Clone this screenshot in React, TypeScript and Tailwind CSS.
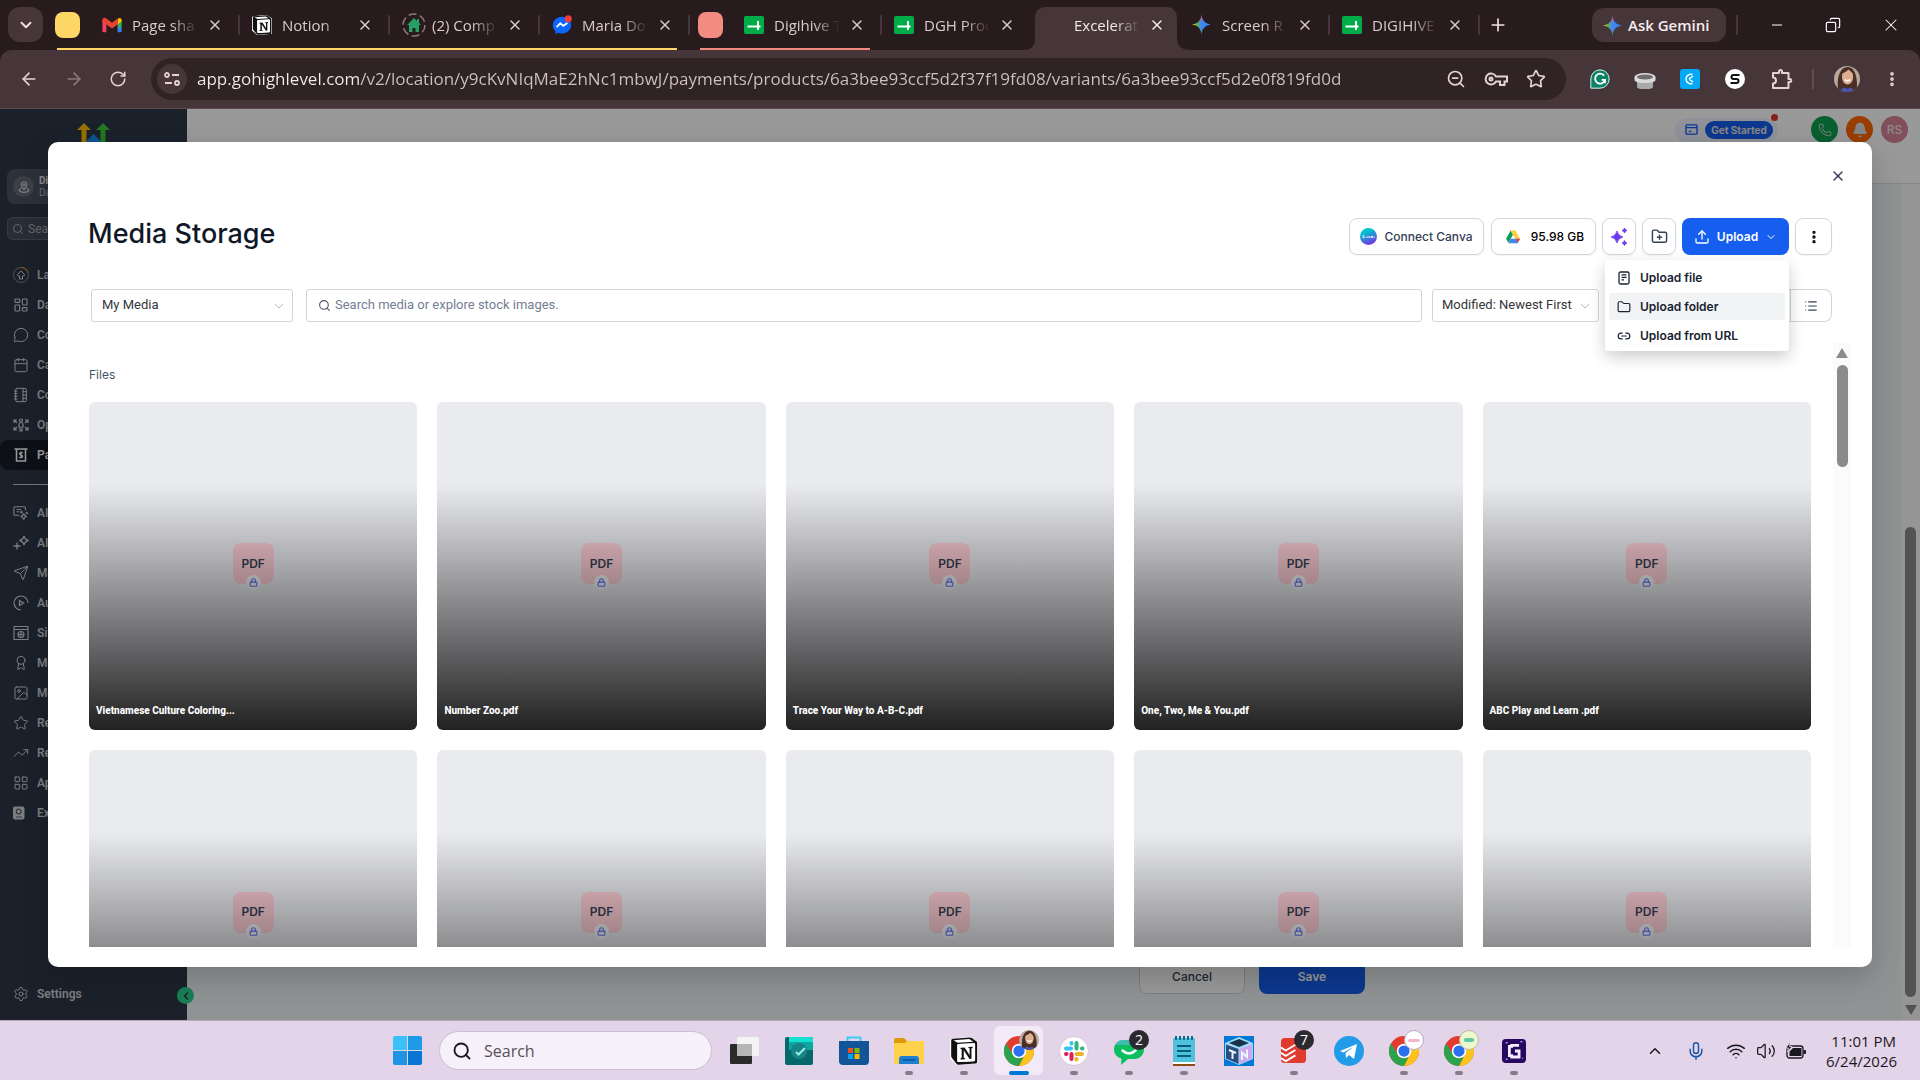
import type { ReactNode } from "react";
import {
  ArrowLeft,
  ArrowRight,
  Award,
  Bell,
  Calendar,
  ChevronDown,
  ChevronLeft,
  ChevronUp,
  Copy,
  EllipsisVertical,
  Folder,
  FolderPlus,
  Image as ImageIcon,
  LayoutDashboard,
  LayoutGrid,
  Link2,
  List,
  Lock,
  MessageCircle,
  Mic,
  Minus,
  NotebookTabs,
  Phone,
  Plus,
  RotateCw,
  Search,
  Send,
  Settings,
  Star,
  TrendingUp,
  Upload,
  Volume2,
  Wifi,
  X,
  ZoomOut,
} from "lucide-react";

const STAR = "M12 0C12.9 7 17 11.1 24 12C17 12.9 12.9 17 12 24C11.1 17 7 12.9 0 12C7 11.1 11.1 7 12 0Z";

function GmailIcon() {
  return (
    <svg viewBox="0 0 24 20" className="h-4 w-5">
      <path fill="#f0435f" d="M0 3.500 5 7v12H1.500A1.500 1.500 0 0 1 0 17.500z" />
      <path fill="#3c7df0" d="M19 12h5v5.500a1.500 1.500 0 0 1-1.500 1.500H19z" />
      <path fill="#2fb457" d="M19 7l5-3.500V13h-5z" />
      <path fill="#fbbc04" d="M19 2.500C21 .2 24 1 24 4v1.500L19 9.500z" />
      <path fill="#ea4335" d="M0 5.500V4C0 1 3 .2 5 2l7 5.300L19 2v7.500l-7 5-7-5z" />
    </svg>
  );
}

function NotionIcon({ className }: { className: string }) {
  return (
    <svg viewBox="0 0 24 24" className={className}>
      <path fill="#fff" d="M0 2 16.500-.5 24 4v18.500L6.500 24.500 0 18.500z" />
      <path fill="#111" d="M1 3.200C1 2 1.600 1.500 2.700 1.400L16.600.4c1-.1 1.600.1 2.400.7l3.500 2.500c.6.4.8.8.8 1.500v15.800c0 1.200-.6 1.800-1.800 1.900L7.600 23.700c-1 .1-1.500-.1-2.100-.8L1.700 18c-.5-.6-.7-1-.7-1.700zM6.300 7.200v13.300c0 .8.400 1.100 1.200 1l13-.8c.8 0 1-.5 1-1.200V6.300c0-.7-.3-1-.9-1L7.200 6.100c-.6.1-.9.400-.9 1.100z" />
      <path fill="#fff" d="M6.300 7.200c0-.7.300-1 .9-1.100l13.400-.8c.6 0 .9.300.9 1v13.200c0 .7-.2 1.200-1 1.200l-13 .8c-.8.1-1.200-.2-1.200-1z" />
      <path fill="#fff" d="M3 2.700 16.500 1.700 20 4 6.500 4.900z" />
      <path fill="#111" d="M9 9.200 12.500 9l4.300 6.600V9.700l-1-.2V8.600l3.600-.2v1l-1 .3v9l-1.700.2-4.900-7.500v6.500l1.200.3v.8L9 19.200v-.9l1-.3v-7.600L9 10.200z" />
    </svg>
  );
}

function HouseIcon() {
  return (
    <svg viewBox="0 0 24 24" className="size-6">
      <circle cx="12" cy="12" r="11" fill="none" stroke="#8c7a7d" strokeWidth="1.500" strokeDasharray="8 3.500" />
      <path fill="#27a065" d="M12 5 19 12h-2v7h-3.500v-4h-3v4H7v-7H5z" />
      <path fill="#27a065" d="M15 6h2v4h-2z" />
    </svg>
  );
}

function MessengerIcon() {
  return (
    <svg viewBox="0 0 24 24" className="size-5">
      <path fill="#0a66ff" d="M12 2C5.500 2 1 6.600 1 12.300c0 3 1.300 5.500 3.200 7.200V23l3-1.700c1.500.5 3 .8 4.800.8 6.500 0 11-4.600 11-10S18.500 2 12 2z" />
      <path d="m5.500 14.500 4.500-4.500 3.500 3 5-3.500" fill="none" stroke="#fff" strokeWidth="2.200" />
      <circle cx="19.500" cy="4.500" r="4.300" fill="#f23c3c" />
    </svg>
  );
}

function SheetIcon() {
  return (
    <svg viewBox="0 0 20 20" className="size-5">
      <rect y="1" width="20" height="18" rx="2" fill="#00ac47" />
      <path d="M3.500 11.500h13M14 6v9" stroke="#fff" strokeWidth="2" fill="none" />
    </svg>
  );
}

function GeminiIcon() {
  return (
    <svg viewBox="0 0 24 24" className="size-[19px]">
      <defs>
        <linearGradient id="gem" x1="0" y1="0.500" x2="1" y2="0.500">
          <stop offset="0" stopColor="#fbbc04" />
          <stop offset="0.300" stopColor="#4fae6a" />
          <stop offset="0.500" stopColor="#4285f4" />
          <stop offset="1" stopColor="#3b82f6" />
        </linearGradient>
        <linearGradient id="gemTop" x1="0.500" y1="0" x2="0.500" y2="1">
          <stop offset="0" stopColor="#f2453a" />
          <stop offset="0.350" stopColor="#f2453a" stopOpacity="0" />
          <stop offset="0.700" stopColor="#34a853" stopOpacity="0" />
          <stop offset="1" stopColor="#34a853" />
        </linearGradient>
      </defs>
      <path d={STAR} fill="url(#gem)" />
      <path d={STAR} fill="url(#gemTop)" />
    </svg>
  );
}

function ChromeIcon() {
  return (
    <svg viewBox="0 0 24 24" className="size-[30px]">
      <circle cx="12" cy="12" r="12" fill="#e33b2e" />
      <path fill="#2ba24c" d="M1.600 6A12 12 0 0 0 12 24l4.800-9.250a5.500 5.500 0 0 1-9.600 0z" />
      <path fill="#fcc31e" d="M12 24A12 12 0 0 0 22.400 6H12a6 6 0 0 1 4.800 8.750z" />
      <circle cx="12" cy="12" r="5.800" fill="#fff" />
      <circle cx="12" cy="12" r="4.500" fill="#2a6ff0" />
    </svg>
  );
}

function Portrait({ className }: { className: string }) {
  return (
    <svg viewBox="0 0 24 24" className={className}>
      <clipPath id="face">
        <circle cx="12" cy="12" r="12" />
      </clipPath>
      <g clipPath="url(#face)">
        <rect width="24" height="24" fill="#b9a99c" />
        <path fill="#4a2f28" d="M4 24C2 12 5 1 12.500 1S22 12 21 24z" />
        <ellipse cx="12.500" cy="10" rx="5.200" ry="7" fill="#dcae92" />
        <path fill="#4a2f28" d="M7 7c1-4 5-5.500 6-5.500S18 3 18.200 7c-2-1-3.700-2.500-4.700-4C12 5 9 6.500 7 7z" />
        <path d="M10 12.500q2.500 2.500 5 0" stroke="#fff" strokeWidth="1.400" fill="none" />
        <path fill="#4b53b5" d="M6 24c1-4 4-5 6.500-2.500C15 19 18 20 18 24z" />
      </g>
    </svg>
  );
}

type TabProps = { icon?: ReactNode; title: string; active?: boolean; divider?: boolean };

function Tab({ icon, title, active, divider }: TabProps) {
  return (
    <div
      className={`relative flex h-[43px] shrink-0 items-center pb-2 pl-3 ${
        active ? "w-[148px] text-[#f3e9ea]" : "w-[150px] text-[#d9cccf]"
      }`}
    >
      {active && (
        <svg viewBox="0 0 166 43" className="absolute top-0 -left-2 h-[43px] w-[166px]">
          <path fill="#473639" d="M0 43c7 0 11-4 11-11V11C11 4 15 0 22 0h120c7 0 11 4 11 11v21c0 7 5 11 13 11z" />
        </svg>
      )}
      <span className="relative flex w-6 shrink-0 items-center">{icon}</span>
      <span className="relative ml-[6px] w-[66px] text-[15px] leading-5 whitespace-nowrap [mask-image:linear-gradient(90deg,#000_60%,transparent)]">
        {title}
      </span>
      <button aria-label={`Close ${title}`} className="relative ml-[9px] flex size-4 items-center justify-center">
        <X className="size-4" strokeWidth={2.250} />
      </button>
      {divider && <span className="absolute top-2 right-0 h-5 w-[2px] rounded bg-[#473639]" />}
    </div>
  );
}

function BrowserTabs() {
  return (
    <div className="flex h-[50px] items-end bg-[#281b1d] pl-2">
      <button aria-label="Search tabs" className="mb-2 flex h-[35px] w-[35px] shrink-0 items-center justify-center rounded-xl bg-[#473639] text-[#f3dfe2]">
        <ChevronDown className="size-[18px]" strokeWidth={2.500} />
      </button>
      <div className="relative ml-3 flex items-end">
        <span className="mr-[10px] mb-3 h-[26px] w-[25px] rounded-lg bg-[#fed665]" />
        <Tab icon={<GmailIcon />} title="Page sha" divider />
        <Tab icon={<NotionIcon className="size-5" />} title="Notion" divider />
        <Tab icon={<HouseIcon />} title="(2) Comp" divider />
        <Tab icon={<MessengerIcon />} title="Maria Do" divider />
        <span className="absolute right-[13px] bottom-0 left-[2px] h-[2px] bg-[#fed665]" />
      </div>
      <div className="relative ml-2 flex items-end">
        <span className="mr-[9px] mb-3 h-[26px] w-[25px] rounded-lg bg-[#f28b82]" />
        <Tab icon={<SheetIcon />} title="Digihive T" divider />
        <Tab icon={<SheetIcon />} title="DGH Proc" />
        <span className="absolute bottom-0 left-[2px] h-[2px] w-[170px] bg-[#f28b82]" />
      </div>
      <Tab title="Excelerat" active />
      <Tab icon={<GeminiIcon />} title="Screen R" divider />
      <Tab icon={<SheetIcon />} title="DIGIHIVE" divider />
      <button aria-label="New tab" className="mb-[15px] ml-2 text-[#f3dfe2]">
        <Plus className="size-5" />
      </button>
      <div className="mb-2 ml-auto flex items-center text-white">
        <button className="flex h-[34px] w-[134px] items-center gap-[6px] rounded-xl bg-[#473639] pl-[11px] text-[15px] font-semibold whitespace-nowrap text-[#f6ecee]">
          <GeminiIcon />
          Ask Gemini
        </button>
        <span className="ml-[10px] h-5 w-[2px] bg-[#473639]" />
        <button aria-label="Minimize" className="ml-[31px]">
          <Minus className="size-4" strokeWidth={1.500} />
        </button>
        <button aria-label="Restore" className="ml-10">
          <Copy className="size-4 -scale-x-100" strokeWidth={1.750} />
        </button>
        <button aria-label="Close window" className="mr-[19px] ml-10">
          <X className="size-5" strokeWidth={1.250} />
        </button>
      </div>
    </div>
  );
}

function AddressBar() {
  return (
    <div className="bg-[#281b1d]">
      <div className="flex h-[59px] items-center rounded-t-xl border-b border-[#5a4a4c] bg-[#473639] pr-[19px] pl-[19px] text-[#e3d3d6]">
        <button aria-label="Back">
          <ArrowLeft className="size-5" />
        </button>
        <button aria-label="Forward" className="ml-[25px] text-[#8a787b]">
          <ArrowRight className="size-5" />
        </button>
        <button aria-label="Reload" className="ml-[25px]">
          <RotateCw className="size-[18px]" />
        </button>
        <div className="ml-6 flex h-[42px] flex-1 items-center rounded-full bg-[#302325] pr-5 pl-[6px]">
          <button aria-label="Site information" className="flex size-[30px] items-center justify-center rounded-full bg-[#473639]">
            <svg viewBox="0 0 16 16" className="size-4" fill="none" stroke="currentColor" strokeWidth="1.800">
              <circle cx="3" cy="4" r="2" />
              <path d="M8 4h7M1 12h7" />
              <circle cx="13" cy="12" r="2" />
            </svg>
          </button>
          <input
            aria-label="Address"
            readOnly
            value="app.gohighlevel.com/v2/location/y9cKvNIqMaE2hNc1mbwJ/payments/products/6a3bee93ccf5d2f37f19fd08/variants/6a3bee93ccf5d2e0f819fd0d"
            className="ml-[10px] min-w-0 flex-1 bg-[linear-gradient(90deg,#f6ecee_163px,#cfc2c5_163px)] bg-clip-text text-[17px] text-transparent outline-none"
          />
          <button aria-label="Zoom">
            <ZoomOut className="size-5" />
          </button>
          <button aria-label="Passwords" className="ml-[18px]">
            <svg viewBox="0 0 24 14" className="h-[14px] w-6" fill="none" stroke="currentColor" strokeWidth="2">
              <path d="M12 4.500h11v5h-2.500V13H16V9.500h-4A5.500 5.500 0 1 1 12 4.500z" />
              <circle cx="7" cy="7" r="1.500" />
            </svg>
          </button>
          <button aria-label="Bookmark" className="ml-[18px]">
            <Star className="size-5" />
          </button>
        </div>
        <div className="ml-6 flex items-center">
          <svg viewBox="0 0 24 24" className="size-5">
            <path fill="#0c8168" stroke="#d9f3ec" strokeWidth="1.200" d="M12 1a11 11 0 1 1 0 22H1V12A11 11 0 0 1 12 1z" />
            <path d="M17 8a6 6 0 1 0 1 5h-4M18 13v4" stroke="#fff" strokeWidth="2.200" fill="none" />
          </svg>
          <svg viewBox="0 0 22 20" className="ml-6 h-5 w-[22px]">
            <path fill="#a9a9a9" d="M3 11h16v7c0 3-16 3-16 0z" />
            <path fill="#dadada" d="M.5 8h21v3c0 4-21 4-21 0z" />
            <ellipse cx="11" cy="8" rx="10.500" ry="4" fill="#dadada" />
            <ellipse cx="11" cy="8" rx="8" ry="2.500" fill="#6d6d6d" />
          </svg>
          <svg viewBox="0 0 20 20" className="ml-6 size-5">
            <rect width="20" height="20" rx="3" fill="#03a9f4" />
            <path d="M12.500 5.500a4.800 4.800 0 1 0 0 9M9 10l4-3M9 10l4 3" stroke="#fff" strokeWidth="1.500" fill="none" />
          </svg>
          <svg viewBox="0 0 20 20" className="ml-[25px] size-5">
            <circle cx="10" cy="10" r="10" fill="#fff" />
            <path d="M14.500 6h-6a2 2 0 0 0 0 4h3a2 2 0 0 1 0 4h-6" stroke="#111" strokeWidth="2" fill="none" />
          </svg>
          <button aria-label="Extensions" className="ml-[25px]">
            <svg viewBox="0 0 24 24" className="size-6" fill="none" stroke="currentColor" strokeWidth="2" strokeLinejoin="round">
              <path d="M3 6h6V4.500a1.500 1.500 0 0 1 3 0V6h6.500v6h1.200a1.500 1.500 0 0 1 0 3h-1.200v6H3v-4.500a3 3 0 0 0 0-6z" />
            </svg>
          </button>
          <span className="ml-[18px] h-5 w-[2px] bg-[#5f4d50]" />
          <Portrait className="ml-5 size-[26px]" />
          <button aria-label="Browser menu" className="ml-[23px]">
            <EllipsisVertical className="size-[18px]" strokeWidth={3} />
          </button>
        </div>
      </div>
    </div>
  );
}

type IconProps = { className?: string };

function LaunchIcon({ className }: IconProps) {
  return (
    <svg viewBox="0 0 16 16" className={className} fill="none" stroke="currentColor">
      <circle cx="8" cy="8" r="7.500" strokeOpacity="0.500" />
      <path stroke="#f79009" d="M8 .5A7.500 7.500 0 0 1 15.300 6" />
      <path d="M8 4 4.500 7.500a.8.8 0 0 0 .6 1.300h1.400V12h3V8.800h1.400a.8.8 0 0 0 .6-1.300z" />
    </svg>
  );
}

function DashboardIcon({ className }: IconProps) {
  return <LayoutDashboard className={`${className} -scale-x-100`} strokeWidth={1.750} />;
}

function PeopleIcon({ className }: IconProps) {
  return (
    <svg viewBox="0 0 16 14" className={className} fill="none" stroke="currentColor" strokeWidth="1.200">
      <circle cx="8" cy="2.500" r="1.500" />
      <path d="M6 6.500a2 2 0 0 1 4 0V9H9v4H7V9H6z" />
      <path d="M1 5V2h3M1.500 2.500 4 5M15 5V2h-3M14.500 2.500 12 5M1 9v3h3M1.500 11.500 4 9M15 9v3h-3M14.500 11.500 12 9" />
    </svg>
  );
}

function PayIcon({ className }: IconProps) {
  return (
    <svg viewBox="0 0 16 16" className={className} fill="none" stroke="currentColor" strokeWidth="1.500">
      <path d="M1.500 2h13M3.500 2v12h9V2" />
      <path d="M9.700 6.200C9 5.300 6.500 5.300 6.500 6.800S9.600 8 9.600 9.500 7 11 6.300 10M8 4.500v7" strokeWidth="1.200" />
    </svg>
  );
}

function AgentIcon({ className }: IconProps) {
  return (
    <svg viewBox="0 0 18 16" className={className} fill="none" stroke="currentColor" strokeWidth="1.200">
      <path d="M14 5V2.500A1.500 1.500 0 0 0 12.500 1h-10A1.500 1.500 0 0 0 1 2.500V9a1.500 1.500 0 0 0 1.500 1.500H7M4 4h5M4 6.500h3" />
      <path d="M12 8.500q.5 3 3.500 3.500-3 .5-3.500 3.500-.5-3-3.500-3.500 3-.5 3.500-3.500zM9.500 5.500v3M8 7h3M15.500 6.500v3M14 8h3" />
    </svg>
  );
}

function SparkleIcon({ className }: IconProps) {
  return (
    <svg viewBox="0 0 16 16" className={className} fill="none" stroke="currentColor" strokeWidth="1.300">
      <path d="M11 1q.8 3.700 4.500 4.500-3.700.8-4.500 4.500-.8-3.700-4.500-4.500Q10.200 4.700 11 1zM4 7.500v7M.5 11h7" />
    </svg>
  );
}

function AutomationIcon({ className }: IconProps) {
  return (
    <svg viewBox="0 0 16 16" className={className} fill="none" stroke="currentColor" strokeWidth="1.200">
      <path d="M8 15A7 7 0 1 1 15 8M6.500 5.500v5L10.500 8z" />
    </svg>
  );
}

function SiteIcon({ className }: IconProps) {
  return (
    <svg viewBox="0 0 16 16" className={className} fill="none" stroke="currentColor" strokeWidth="1.100">
      <path d="M1 1.500h14v13H1zM1 4.500h14" />
      <circle cx="8" cy="9.500" r="3" />
      <path d="M5 9.500h6M8 6.500v6" />
    </svg>
  );
}

function BookIcon({ className }: IconProps) {
  return (
    <svg viewBox="0 0 16 16" className={className}>
      <rect x="0" y="1.500" width="11.500" height="13" rx="2" fill="currentColor" />
      <circle cx="5.700" cy="6.500" r="2.500" fill="none" stroke="#2d3748" />
      <path d="M3 12h6" stroke="#2d3748" strokeWidth="0.700" />
    </svg>
  );
}

const mainNav = [
  { label: "Launchpad", icon: LaunchIcon },
  { label: "Dashboard", icon: DashboardIcon },
  { label: "Conversations", icon: MessageCircle },
  { label: "Calendars", icon: Calendar },
  { label: "Contacts", icon: NotebookTabs },
  { label: "Opportunities", icon: PeopleIcon },
  { label: "Payments", icon: PayIcon, active: true },
];

const toolsNav = [
  { label: "AI Agents", icon: AgentIcon },
  { label: "AI Studio", icon: SparkleIcon },
  { label: "Marketing", icon: Send },
  { label: "Automation", icon: AutomationIcon },
  { label: "Sites", icon: SiteIcon },
  { label: "Memberships", icon: Award },
  { label: "Media Storage", icon: ImageIcon },
  { label: "Reputation", icon: Star },
  { label: "Reporting", icon: TrendingUp },
  { label: "App Marketplace", icon: LayoutGrid },
  { label: "Exclusive", icon: BookIcon },
];

function NavLink({ item }: { item: (typeof mainNav)[number] | (typeof toolsNav)[number] }) {
  const Icon = item.icon;
  const active = "active" in item && item.active;
  return (
    <a
      href="#"
      className={`flex h-[30px] items-center gap-2 rounded-lg pl-[13px] text-[12px] font-semibold ${
        active ? "bg-[#171c26] text-white" : "text-[#cfd2d6]"
      }`}
    >
      <Icon className="size-4" strokeWidth={1.500} />
      {item.label}
    </a>
  );
}

function Sidebar() {
  return (
    <aside className="relative flex w-[187px] shrink-0 flex-col bg-[#2d3748] font-[family-name:Roboto,sans-serif]">
      <svg viewBox="0 0 34 30" className="mt-[14px] ml-[77px] h-[30px] w-[34px]">
        <path fill="#ffbc00" d="M7 0l7 7H9.500v23h-5V7H0z" />
        <path fill="#37ca37" d="M26 0l7 7h-4.500v23h-5V7H19z" />
        <path fill="#188bf6" d="M16.500 11l7 7v12h-14V18z" />
      </svg>
      <div className="mt-4 mr-2 ml-[7px] flex h-[35px] items-center gap-[5px] rounded-lg bg-[#4a5361] pl-[6px]">
        <span className="flex size-[21px] items-center justify-center rounded-full bg-[#646b76] text-[#cfd3d8]">
          <svg viewBox="0 0 12 12" className="size-3" fill="none" stroke="currentColor" strokeWidth="1.200">
            <path d="M6 8.500C4 6.500 3.200 5.300 3.200 3.800a2.800 2.800 0 0 1 5.600 0c0 1.500-.8 2.700-2.800 4.700z" />
            <circle cx="6" cy="3.800" r="0.800" />
            <path d="M3.500 7.500C-1 9 1.500 11.300 6 11.300S13 9 8.500 7.500" />
          </svg>
        </span>
        <div className="text-[10px] leading-3 text-[#b5bac1]">
          <p className="font-bold text-[#e4e6e9]">Digihive</p>
          <p>Davao City</p>
        </div>
      </div>
      <label className="mt-[13px] mr-2 ml-[7px] flex h-[23px] items-center gap-1 rounded-md border border-[#5d6572] bg-[#434c5b] pl-1 text-[#a9aeb6]">
        <Search className="size-3" />
        <input placeholder="Search" aria-label="Search menu" className="w-24 text-[12px] outline-none placeholder:text-[#a9aeb6]" />
      </label>
      <nav className="mt-5">
        {mainNav.map((item) => (
          <NavLink key={item.label} item={item} />
        ))}
        <hr className="mt-[14px] mr-3 mb-[13px] ml-[13px] border-[#c5c9ce]" />
        {toolsNav.map((item) => (
          <NavLink key={item.label} item={item} />
        ))}
      </nav>
      <a href="#" className="mt-auto mb-[17px] flex items-center gap-2 pl-[13px] text-[12px] font-semibold text-[#cfd2d6]">
        <Settings className="size-4" strokeWidth={1.500} />
        Settings
      </a>
      <button aria-label="Collapse sidebar" className="absolute -right-[7px] bottom-4 flex size-[17px] items-center justify-center rounded-full bg-[#2bd38f] text-[#2d3748]">
        <ChevronLeft className="size-3" strokeWidth={3} />
      </button>
    </aside>
  );
}

function ProductPage() {
  return (
    <div className="flex min-w-0 flex-1 flex-col">
      <header className="h-[75px] border-b border-[#dcdfe3] bg-white pt-[7px] pr-3">
        <div className="flex h-[27px] items-center justify-end">
          <div className="relative flex h-6 items-center gap-[7px] rounded-full bg-[#eef4ff] pr-[5px] pl-[10px] text-[#155eef]">
            <svg viewBox="0 0 14 12" className="h-[11px] w-[13px]" fill="none" stroke="currentColor" strokeWidth="1.500">
              <rect x="1" y="1" width="12" height="10" rx="1" />
              <path d="M1 4h12M4 8h3" />
            </svg>
            <button className="h-[18px] w-[68px] rounded-full bg-[#155eef] text-[10px] leading-[18px] font-bold text-[#e0e0e0]">Get Started</button>
            <span className="absolute -top-1 right-0 size-[7px] rounded-full bg-[#e8352b]" />
          </div>
          <button aria-label="Call" className="ml-[33px] flex size-[27px] items-center justify-center rounded-full bg-[#10a04f] text-[#e0e0e0]">
            <Phone className="size-[14px]" strokeWidth={1.500} />
          </button>
          <button aria-label="Notifications" className="ml-2 flex size-[27px] items-center justify-center rounded-full bg-[#ff6600] text-[#e0e0e0]">
            <Bell className="size-4" fill="currentColor" />
          </button>
          <button className="ml-2 size-[27px] rounded-full bg-[#d58596] text-[12px] font-medium text-[#f1dfe3]">RS</button>
        </div>
      </header>
      <div className="flex flex-1">
        <div className="flex flex-1 items-end justify-center gap-[14px] bg-[#eff5f7] pb-[26px] pl-[416px] text-[12px] font-medium">
          <button className="h-[34px] w-[106px] rounded-lg border border-[#d0d5dd] bg-white text-[#344054]">Cancel</button>
          <button className="h-[34px] w-[106px] rounded-lg bg-[#155eef] font-semibold text-white">Save</button>
        </div>
        <div className="flex w-[19px] flex-col items-center justify-end bg-[#f9f9f9]">
          <span className="mb-2 h-[470px] w-[11px] rounded-full bg-[#8a8a8a]" />
          <svg viewBox="0 0 12 10" className="mb-[5px] h-[10px] w-3">
            <path fill="#8a8a8a" d="M0 0h12L6 10z" />
          </svg>
        </div>
      </div>
    </div>
  );
}

const files = [
  "Vietnamese Culture Coloring...",
  "Number Zoo.pdf",
  "Trace Your Way to A-B-C.pdf",
  "One, Two, Me & You.pdf",
  "ABC Play and Learn .pdf",
  "Shapes Activity Book.pdf",
  "Color by Number.pdf",
  "Tracing Letters.pdf",
  "My First Words.pdf",
  "Count with Me.pdf",
];

function FileCard({ name }: { name: string }) {
  return (
    <article className="relative flex aspect-square items-center justify-center overflow-hidden rounded-md bg-[#eaebef] pb-[5px]">
      <div className="relative flex size-[41px] items-center justify-center rounded-lg bg-[#fbccd3] text-[12px] font-semibold text-[#344054]">
        PDF
        <span className="absolute -bottom-[6px] flex size-[15px] items-center justify-center rounded-full bg-[#f2f4f7] text-[#6172f3]">
          <Lock className="size-[9px]" strokeWidth={3} />
        </span>
      </div>
      <div className="absolute inset-0 flex items-end bg-linear-to-b from-transparent from-25% to-black/86 px-[7px] pb-[11px]">
        <p className="font-[family-name:Roboto,sans-serif] text-[10px] leading-4 font-extrabold text-white">{name}</p>
      </div>
    </article>
  );
}

function DocIcon({ className }: IconProps) {
  return (
    <svg viewBox="0 0 14 14" className={className} fill="none" stroke="currentColor" strokeWidth="1.300">
      <rect x="2" y="1" width="10" height="12" rx="1.500" />
      <path d="M4.500 3.800h5M4.500 6.300h5M4.500 8.800h2.500" />
    </svg>
  );
}

const uploadOptions = [
  { label: "Upload file", icon: DocIcon },
  { label: "Upload folder", icon: Folder, hover: true },
  { label: "Upload from URL", icon: Link2 },
];

function Toolbar() {
  return (
    <div className="mt-[30px] flex h-[37px] items-center justify-between px-10">
      <h1 className="-mt-1 text-[27px] font-medium text-[#101828]">Media Storage</h1>
      <div className="flex h-full gap-[6px] text-[12px] font-medium text-[#344054]">
        <button className="flex w-[135px] items-center justify-center gap-[7px] rounded-lg border border-[#d0d5dd] shadow-xs">
          <svg viewBox="0 0 18 18" className="size-[17px]">
            <defs>
              <linearGradient id="canva" x1="0.300" y1="0" x2="0.700" y2="1">
                <stop offset="0.200" stopColor="#00c4cc" />
                <stop offset="1" stopColor="#7d2ae8" />
              </linearGradient>
            </defs>
            <circle cx="9" cy="9" r="9" fill="url(#canva)" />
            <path d="M5 8.500q-2-1-2 .8t2 .7M7 9.500v1M8.500 8.500v2M10.500 8.500v2M12 8.500l.7 2 .7-2M15 9v1.500" stroke="#fff" strokeWidth="1" fill="none" />
          </svg>
          Connect Canva
        </button>
        <button className="ml-[1px] flex w-[105px] items-center justify-center gap-[11px] rounded-lg border border-[#d0d5dd] pl-[3px] text-black shadow-xs">
          <svg viewBox="0 0 24 22" className="h-[14px] w-[14px]">
            <path fill="#0f9d58" d="M8 0 12 7 4 21 0 14z" />
            <path fill="#ffcd40" d="M8 0h8l8 14h-8z" />
            <path fill="#4285f4" d="M8 14h16l-4 7.500H4z" />
            <path fill="#ea4335" d="M16.500 14H24l-4 7z" />
          </svg>
          95.98 GB
        </button>
        <button aria-label="Generate with AI" className="flex w-[34px] items-center justify-center rounded-lg border border-[#d0d5dd] shadow-xs">
          <svg viewBox="0 0 18 18" className="size-[18px]" fill="#6938ef">
            <path d="M7 3q1 5 6 6-5 1-6 6-1-5-6-6 5-1 6-6zM14.500 0q.5 2 2.500 2.500-2 .5-2.500 2.500-.5-2-2.500-2.500 2-.5 2.500-2.500zM14.500 12.500q.5 2 2.500 2.500-2 .5-2.500 2.500-.5-2-2.500-2.500 2-.5 2.500-2.500z" stroke="#6938ef" strokeWidth="0.800" />
          </svg>
        </button>
        <button aria-label="New folder" className="flex w-[34px] items-center justify-center rounded-lg border border-[#d0d5dd] shadow-xs">
          <FolderPlus className="size-[17px]" />
        </button>
        <div className="relative">
          <button className="flex h-full w-[107px] items-center justify-center gap-[7px] rounded-lg bg-[#155eef] font-semibold text-white">
            <Upload className="size-4" />
            Upload
            <ChevronDown className="size-3" />
          </button>
          <div className="absolute top-full right-0 z-10 mt-[5px] flex w-[184px] flex-col gap-[2px] rounded-[3px] bg-white px-1 pt-1 pb-[2px] shadow-[0_6px_16px_rgba(0,0,0,0.2)]">
            {uploadOptions.map(({ label, icon: Icon, hover }) => (
              <button
                key={label}
                className={`flex h-[27px] items-center gap-[9px] rounded-[3px] pl-2 font-semibold text-[#182230] ${hover ? "bg-[#f2f3f5]" : ""}`}
              >
                <Icon className="size-[14px]" />
                {label}
              </button>
            ))}
          </div>
        </div>
        <button aria-label="More options" className="flex w-[37px] items-center justify-center rounded-lg border border-[#d0d5dd] text-black shadow-xs">
          <EllipsisVertical className="size-4" strokeWidth={3} />
        </button>
      </div>
    </div>
  );
}

function Filters() {
  return (
    <div className="mt-[34px] flex h-[33px] pr-10 pl-[43px] text-[13px] text-[#333639]">
      <div className="relative w-[202px]">
        <select aria-label="Media source" className="h-full w-full appearance-none rounded-[3px] border border-[#d0d5dd] px-[10px] pb-[2px] font-[family-name:Roboto,sans-serif] outline-none">
          <option>My Media</option>
        </select>
        <ChevronDown className="pointer-events-none absolute top-[9px] right-[6px] size-4 text-[#b5b8be]" strokeWidth={1.500} />
      </div>
      <label className="ml-[13px] flex flex-1 items-center gap-1 rounded-[3px] border border-[#d0d5dd] pl-[11px] text-[#475467]">
        <Search className="size-[13px]" />
        <input aria-label="Search media" placeholder="Search media or explore stock images." className="flex-1 pb-[2px] font-[family-name:Roboto,sans-serif] text-[13px] outline-none placeholder:text-[#757e93]" />
      </label>
      <div className="ml-[10px] flex w-[400px] justify-between">
        <div className="relative w-[167px]">
          <select aria-label="Sort by" className="h-full w-full appearance-none rounded-[3px] border border-[#d0d5dd] px-[9px] pb-[2px] font-[family-name:Roboto,sans-serif] outline-none">
            <option>Modified: Newest First</option>
          </select>
          <ChevronDown className="pointer-events-none absolute top-[9px] right-[6px] size-4 text-[#b5b8be]" strokeWidth={1.500} />
        </div>
        <div className="flex">
          <button aria-label="Grid view" className="flex w-[42px] items-center justify-center rounded-l-lg border border-[#d0d5dd] bg-[#f9fafb]">
            <LayoutGrid className="size-[14px]" />
          </button>
          <button aria-label="List view" className="flex w-[41px] items-center justify-center rounded-r-lg border border-l-0 border-[#d0d5dd] text-[#344054]">
            <List className="size-[14px]" />
          </button>
        </div>
      </div>
    </div>
  );
}

function MediaModal() {
  return (
    <div className="absolute inset-0 flex bg-black/40 px-12 pt-[33px] pb-[53px]">
      <section role="dialog" aria-label="Media Storage" className="flex min-w-0 flex-1 flex-col rounded-[10px] bg-white pt-[22px] shadow-[0_10px_30px_rgba(0,0,0,0.2)]">
        <button aria-label="Close" className="mr-[22px] flex size-6 items-center justify-center self-end text-[#344054]">
          <X className="size-4" strokeWidth={2.250} />
        </button>
        <Toolbar />
        <Filters />
        <div className="mt-5 mb-5 flex min-h-0 flex-1 pr-[21px] pl-[41px]">
          <div className="flex-1 overflow-hidden pr-[22px]">
            <h2 className="mt-[25px] mb-[19px] text-[12px] leading-4 text-[#475467]">Files</h2>
            <div className="grid grid-cols-5 gap-5">
              {files.map((name) => (
                <FileCard key={name} name={name} />
              ))}
            </div>
          </div>
          <div className="flex w-[18px] flex-col items-center bg-[#fbfbfb] pt-[6px]">
            <svg viewBox="0 0 12 10" className="h-[10px] w-3">
              <path fill="#8b8b8b" d="M6 0l6 10H0z" />
            </svg>
            <span className="mt-[7px] h-[102px] w-[11px] rounded-full bg-[#8b8b8b]" />
          </div>
        </div>
      </section>
    </div>
  );
}

function TaskIcon({ label, children, dot, active }: { label: string; children: ReactNode; dot?: boolean; active?: boolean }) {
  return (
    <button
      aria-label={label}
      className={`relative mx-[3px] flex h-[49px] w-[49px] items-center justify-center rounded-md ${active ? "bg-[#f2eaf7]" : ""}`}
    >
      {children}
      {dot && <span className="absolute bottom-0 h-1 w-2 rounded-full bg-[#867b8b]" />}
      {active && <span className="absolute bottom-0 h-1 w-5 rounded-full bg-[#0078d4]" />}
    </button>
  );
}

function Badge({ children }: { children: ReactNode }) {
  return (
    <span className="absolute top-1 right-1 flex size-5 items-center justify-center rounded-full bg-[#2b2a30] text-[14px] leading-none text-white">
      {children}
    </span>
  );
}

function Taskbar() {
  return (
    <footer className="flex h-15 shrink-0 items-center border-t border-[#b5a6b8] bg-[#e3d4ea] pr-6 pl-[393px] text-[#1c1820]">
      <button aria-label="Start" className="grid size-[29px] grid-cols-2 gap-[1px]">
        <span className="rounded-tl-[2px] bg-[#3cc0f8]" />
        <span className="rounded-tr-[2px] bg-[#1f9ae6]" />
        <span className="rounded-bl-[2px] bg-[#1f93e4]" />
        <span className="rounded-br-[2px] bg-[#0a76d4]" />
      </button>
      <label className="mr-[4px] ml-[17px] flex h-[39px] w-[273px] items-center gap-3 rounded-full border border-[#cdbdd2] bg-[#f7f1fa] pl-3">
        <Search className="size-5" strokeWidth={2.250} />
        <input aria-label="Search Windows" placeholder="Search" className="w-40 text-[16px] outline-none placeholder:text-[#56505a]" />
      </label>
      <TaskIcon label="Task view">
        <svg viewBox="0 0 30 30" className="size-[30px]">
          <rect x="1" y="8" width="22" height="20" rx="1" fill="#2a2a2a" />
          <rect x="8" y="1" width="22" height="19" rx="1" fill="#f4f4f4" />
          <rect x="8" y="8" width="15" height="12" fill="#b5b5b5" />
        </svg>
      </TaskIcon>
      <TaskIcon label="Checklist">
        <svg viewBox="0 0 28 28" className="size-7">
          <rect width="28" height="28" rx="2" fill="#06686b" />
          <path fill="#12e0d0" d="M4 0h22a2 2 0 0 1 2 2v3H4z" />
          <path fill="#0fa6a0" d="M4 5h24v8H4z" />
          <circle cx="14" cy="14" r="8" fill="#158488" />
          <path d="m11 15 2.500 2.500L20 11" stroke="#9cece6" strokeWidth="2" fill="none" />
        </svg>
      </TaskIcon>
      <TaskIcon label="Store">
        <svg viewBox="0 0 30 30" className="size-[30px]">
          <path d="M8.500 6V1.500h13V6" stroke="#3ccbf4" strokeWidth="2" fill="none" />
          <path fill="#135398" d="M0 5h30v20a4 4 0 0 1-4 4H4a4 4 0 0 1-4-4z" />
          <path fill="#f25022" d="M9 12h5v5H9z" />
          <path fill="#7fba00" d="M15.500 12h5v5h-5z" />
          <path fill="#00a4ef" d="M9 18h5v5H9z" />
          <path fill="#ffb900" d="M15.500 18h5v5h-5z" />
        </svg>
      </TaskIcon>
      <TaskIcon label="File Explorer" dot>
        <svg viewBox="0 0 30 28" className="h-7 w-[30px]">
          <path fill="#dc9a07" d="M0 3a2 2 0 0 1 2-2h8l3 3v8H0z" />
          <path fill="#ffd04a" d="M0 6h11l2-2h17v23H1a1 1 0 0 1-1-1z" />
          <path fill="#1d7fd3" d="M5 27v-5a3 3 0 0 1 3-3h14a3 3 0 0 1 3 3v5z" />
          <path stroke="#0b5394" strokeWidth="1.500" d="M9 23h12" />
        </svg>
      </TaskIcon>
      <TaskIcon label="Notion" dot>
        <NotionIcon className="size-7" />
      </TaskIcon>
      <TaskIcon label="Chrome" active>
        <ChromeIcon />
        <Portrait className="absolute top-1 right-1 size-5" />
      </TaskIcon>
      <TaskIcon label="Slack" dot>
        <svg viewBox="0 0 30 30" className="size-[30px]" strokeWidth="4" strokeLinecap="round">
          <circle cx="15" cy="15" r="14.500" fill="#fff" stroke="#d4c8d8" strokeWidth="1" />
          <path stroke="#36c5f0" d="M7 12.500h5M12.500 7v.5" />
          <path stroke="#2eb67d" d="M17.500 7v5.500M23 12.500h.5" />
          <path stroke="#ecb22e" d="M17.500 18H23M17.500 23v.5" />
          <path stroke="#e01e5a" d="M12.500 18v5M7 18h.5" />
        </svg>
      </TaskIcon>
      <TaskIcon label="Chat" dot>
        <svg viewBox="0 0 30 30" className="size-[30px]">
          <path fill="#0bbf61" d="M9 4h12a9 9 0 0 1 9 9v1a9 9 0 0 1-9 9h-7l-7 6 .5-6.500A9 9 0 0 1 0 14v-1a9 9 0 0 1 9-9z" />
          <path fill="#58b9cf" opacity="0.700" d="M9 4h12a9 9 0 0 1 8 5H1a9 9 0 0 1 8-5z" />
          <path d="M8.500 14.500q6.500 6 13 0" stroke="#fff" strokeWidth="2.500" strokeLinecap="round" fill="none" />
        </svg>
        <Badge>2</Badge>
      </TaskIcon>
      <TaskIcon label="Notepad" dot>
        <svg viewBox="0 0 24 32" className="h-8 w-6">
          <rect x="1" y="3" width="22" height="26" rx="1" fill="#4fc3dc" />
          <path d="M5 11h14M5 16h14M5 21h14" stroke="#0b5b7a" strokeWidth="2" />
          <path d="M4 1v4M8 1v4M12 1v4M16 1v4M20 1v4" stroke="#0f6c8c" strokeWidth="2" />
          <path fill="#fff" d="M1 27h22v2H1z" />
          <path fill="#8a4b12" d="M1 29h22v2H1z" />
        </svg>
      </TaskIcon>
      <TaskIcon label="TN Notes">
        <svg viewBox="0 0 30 30" className="size-[30px]">
          <rect width="30" height="30" fill="#0078d4" />
          <path fill="#9edcf5" d="M15 1 29 7v16l-14 6L1 23V7z" />
          <path fill="#16324f" d="M15 3 25 7l-10 4L5 7z" />
          <path fill="#2b4d7d" d="M2 8.500 14.500 13v15L2 22.500z" />
          <path fill="#cda5ee" d="M28 8.500 15.500 13v15L28 22.500z" />
          <path d="M5 14l7 3M8.500 15.500V23M18 24v-7.500l5 4.500v-7.500" stroke="#eaf6ff" strokeWidth="2" fill="none" />
        </svg>
      </TaskIcon>
      <TaskIcon label="Todoist" dot>
        <svg viewBox="0 0 26 26" className="size-[25px]">
          <rect width="26" height="26" rx="4" fill="#e03b2e" />
          <path d="m0 10 5 3 10-6M0 15.500l5 3 10-6M0 21l5 3 10-6" stroke="#fff" strokeWidth="2" fill="none" />
        </svg>
        <Badge>7</Badge>
      </TaskIcon>
      <TaskIcon label="Telegram">
        <svg viewBox="0 0 30 30" className="size-[30px]">
          <circle cx="15" cy="15" r="15" fill="#229ce8" />
          <path fill="#fff" d="m6 15 17-7-3 15-5-4-3 3-.5-5L19 11l-9.500 5.500z" />
        </svg>
      </TaskIcon>
      <TaskIcon label="Chrome work profile" dot>
        <ChromeIcon />
        <span className="absolute top-1 right-1 flex size-5 items-center justify-center rounded-full border border-[#b9a9bd] bg-white">
          <span className="h-[3px] w-3 rounded-full bg-[#f3b6cb]" />
        </span>
      </TaskIcon>
      <TaskIcon label="Chrome client profile" dot>
        <ChromeIcon />
        <span className="absolute top-1 right-1 flex size-5 items-center justify-center rounded-full border border-[#b9b9a0] bg-[#eef8cf]">
          <span className="h-1 w-[10px] rounded-full bg-[#5fc9a8]" />
        </span>
      </TaskIcon>
      <TaskIcon label="G app" dot>
        <svg viewBox="0 0 26 26" className="size-6">
          <rect width="26" height="26" rx="4" fill="#26085f" />
          <path d="M18.500 7h-8v1H8v10h2.500v1.500h8V13H14" stroke="#f3ecff" strokeWidth="3" fill="none" />
          <path d="M4 4h2M20 3h2M4 22h2M22 21h1" stroke="#b79cf0" strokeWidth="1.500" />
        </svg>
      </TaskIcon>
      <div className="ml-auto flex items-center">
        <ChevronUp className="size-[18px]" />
        <Mic className="ml-[22px] size-5 text-[#1a56a8]" strokeWidth={1.750} />
        <Wifi className="ml-5 size-5" strokeWidth={1.750} />
        <Volume2 className="ml-[10px] size-5" strokeWidth={1.500} />
        <svg viewBox="0 0 20 18" className="ml-[10px] h-[18px] w-5">
          <rect x="1" y="4" width="16" height="12" rx="2.500" fill="none" stroke="currentColor" strokeWidth="1.300" />
          <path fill="currentColor" d="M7 6h8.500v8h-12V9.500zM17.500 8H19a1 1 0 0 1 1 1v2a1 1 0 0 1-1 1h-1.500z" />
          <path fill="currentColor" stroke="#e3d4ea" strokeWidth="0.800" d="M4 0 0 6h2.500L1.500 10 6 4.500H3.500z" />
        </svg>
        <p className="ml-5 w-[70px] text-right text-[15px] leading-5">
          11:01 PM
          <br />
          6/24/2026
        </p>
      </div>
    </footer>
  );
}

export default function App() {
  return (
    <div className="flex h-screen flex-col overflow-hidden font-[family-name:'Open_Sans',sans-serif]">
      <BrowserTabs />
      <AddressBar />
      <main className="relative flex min-h-0 flex-1 overflow-hidden font-[family-name:Inter,sans-serif]">
        <Sidebar />
        <ProductPage />
        <MediaModal />
      </main>
      <Taskbar />
    </div>
  );
}
